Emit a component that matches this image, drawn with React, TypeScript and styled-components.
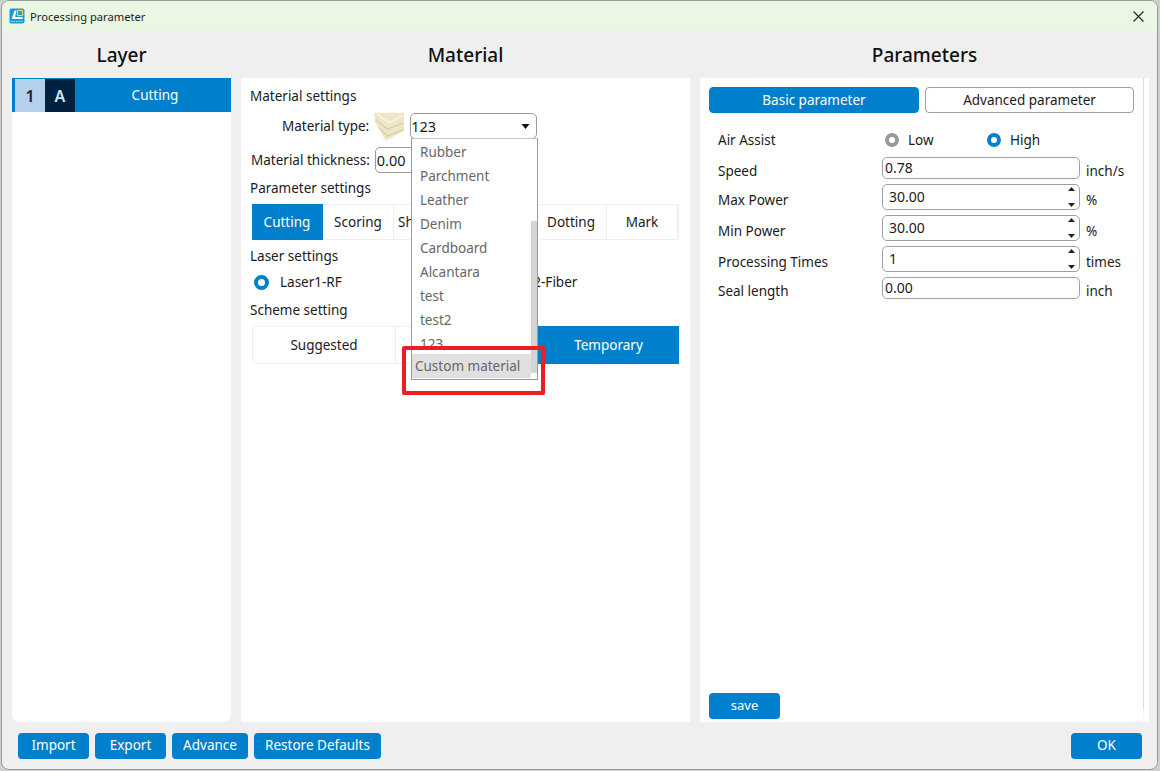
import { createGlobalStyle } from "styled-components";
import styled from "styled-components";

const GlobalStyle = createGlobalStyle`
  html, body {
    margin: 0;
    padding: 0;
    background: #cfcfcf;
  }
  body {
    font-family: "Noto Sans", "Liberation Sans", sans-serif;
    font-size: 13.5px;
    color: #1a1a1a;
  }
`;

const blue = "#0080cc";

const Screen = styled.div`
  width: 1160px;
  height: 771px;
  padding: 0 2px 1px 1px;
  box-sizing: border-box;
  overflow: hidden;
`;

const Window = styled.div`
  height: 100%;
  display: flex;
  flex-direction: column;
  background: #efefef;
  border: 1px solid #9a9a9a;
  border-radius: 8px;
  box-sizing: border-box;
  overflow: hidden;
`;

const TitleBar = styled.div`
  height: 30px;
  flex: none;
  display: flex;
  align-items: center;
  gap: 5px;
  padding: 0 13px 0 7px;
  background: #eaf7e3;
  font-size: 11.2px;
  color: #222;
`;

const TitleText = styled.span`
  flex: 1;
`;

const Columns = styled.div`
  flex: 1;
  min-height: 0;
  display: grid;
  grid-template-columns: 219px 449px 449px;
  gap: 10px;
  padding: 0 0 0 10px;
`;

const Column = styled.section`
  display: flex;
  flex-direction: column;
  min-height: 0;
`;

const Heading = styled.h2`
  height: 47px;
  margin: 0;
  flex: none;
  display: flex;
  align-items: center;
  justify-content: center;
  font-size: 19px;
  font-weight: 500;
  color: #111;
`;

const LayerPanel = styled.div`
  flex: 1;
  background: #fff;
  border-radius: 0 0 8px 8px;
`;

const LayerRow = styled.div`
  height: 34px;
  display: flex;
  align-items: stretch;
  padding: 1px 0 0 3px;
  box-sizing: border-box;
  background: ${blue};
  color: #fff;
`;

const LayerCell = styled.span<{ $bg: string; $fg: string }>`
  width: 30px;
  display: flex;
  align-items: center;
  justify-content: center;
  font-size: 16px;
  font-weight: 600;
  background: ${(p) => p.$bg};
  color: ${(p) => p.$fg};
`;

const LayerName = styled.span`
  flex: 1;
  display: flex;
  align-items: center;
  justify-content: center;
  padding: 0 0 2px 4px;
`;

const MaterialPanel = styled.div`
  position: relative;
  flex: 1;
  background: #fff;
  padding: 8px 11px 0 9px;
  box-sizing: border-box;
`;

const GroupTitle = styled.div`
  height: 20px;
  line-height: 20px;
`;

const FieldRow = styled.div`
  display: flex;
  align-items: center;
  height: 26px;
`;

const TypeRow = styled(FieldRow)`
  margin-top: 7px;
  padding-left: 32px;
`;

const ThicknessRow = styled(FieldRow)`
  margin: 8px 0 5px 1px;
`;

const FieldLabel = styled.span`
  margin-right: 5px;
  white-space: nowrap;
`;

const SelectBox = styled.div`
  width: 127px;
  height: 26px;
  margin-left: 6px;
  display: flex;
  align-items: center;
  justify-content: space-between;
  padding: 0 6px 0 0;
  box-sizing: border-box;
  background: #fff;
  border: 1px solid #9a9a9a;
  border-radius: 5px;
  font-size: 14.5px;
`;

const ThicknessInput = styled.div`
  width: 150px;
  height: 26px;
  padding-left: 1px;
  line-height: 24px;
  box-sizing: border-box;
  border: 1px solid #9a9a9a;
  border-radius: 5px;
  font-size: 14.5px;
`;

const TabStrip = styled.div`
  display: grid;
  grid-template-columns: repeat(6, 71px);
  height: 36px;
  margin: 6px 0 6px 2px;
  border: 1px solid #efefef;
  border-left: 0;
  border-radius: 3px;
  box-sizing: border-box;
`;

const Tab = styled.div<{ $active?: boolean; $bare?: boolean }>`
  display: flex;
  align-items: center;
  justify-content: ${(p) => (p.$bare ? "flex-start" : "center")};
  padding-left: ${(p) => (p.$bare ? "4px" : "0")};
  padding-bottom: 1px;
  box-sizing: border-box;
  margin: -1px 0;
  background: ${(p) => (p.$active ? blue : "transparent")};
  color: ${(p) => (p.$active ? "#fff" : "#1a1a1a")};
  border-right: 1px solid ${(p) => (p.$active ? blue : "#efefef")};
`;

const LaserChoices = styled.div`
  display: grid;
  grid-template-columns: 219px 1fr;
  height: 30px;
  margin: 1px 0 3px 4px;
  align-items: center;
`;

const RadioOption = styled.label`
  display: flex;
  align-items: center;
  gap: 11px;
  white-space: nowrap;
`;

const RadioDot = styled.span<{ $on?: boolean }>`
  width: 15px;
  height: 15px;
  box-sizing: border-box;
  border-radius: 50%;
  border: 4px solid ${(p) => (p.$on ? blue : "#999")};
  background: #fff;
`;

const SchemeStrip = styled.div`
  display: grid;
  grid-template-columns: 143px 142px 142px;
  height: 38px;
  margin: 6px 0 0 2px;
  border: 1px solid #efefef;
  border-radius: 3px;
  box-sizing: border-box;
`;

const SchemeCell = styled.div<{ $active?: boolean }>`
  display: flex;
  align-items: center;
  justify-content: center;
  margin: -1px 0;
  background: ${(p) => (p.$active ? blue : "transparent")};
  color: ${(p) => (p.$active ? "#fff" : "#1a1a1a")};
  border-right: 1px solid #efefef;
`;

const DropList = styled.div`
  position: absolute;
  left: 170px;
  top: 60px;
  width: 127px;
  height: 242px;
  box-sizing: border-box;
  background: #fff;
  border: 1px solid #9a9a9a;
  border-top-color: #c4c4c4;
  overflow: hidden;
  display: flex;
`;

const DropItems = styled.div`
  width: 119px;
  display: flex;
  flex-direction: column;
  padding-top: 2px;
`;

const DropItem = styled.div`
  flex: none;
  height: 24px;
  line-height: 22px;
  padding-left: 8px;
  color: #666;
`;

const DropCustom = styled(DropItem)`
  position: absolute;
  left: 0;
  top: 215px;
  width: 119px;
  box-sizing: border-box;
  padding-left: 3px;
  line-height: 25px;
  background: #e0e0e0;
`;

const DropScroll = styled.div`
  width: 6px;
  margin-left: 1px;
  display: flex;
  flex-direction: column;
  justify-content: flex-end;
  padding-bottom: 6px;
`;

const DropThumb = styled.div`
  height: 152px;
  background: #d4d4d4;
`;

const Highlight = styled.div`
  position: absolute;
  left: 161px;
  top: 268px;
  width: 143px;
  height: 49px;
  box-sizing: border-box;
  border: 4px solid #ee1c25;
  border-radius: 2px;
`;

const ParamPanel = styled.div`
  flex: 1;
  display: flex;
  background: #fff;
  min-height: 0;
`;

const ParamBody = styled.div`
  flex: 1;
  display: flex;
  flex-direction: column;
  padding: 9px 9px 3px 9px;
  box-sizing: border-box;
`;

const ModeRow = styled.div`
  display: grid;
  grid-template-columns: 210px 209px;
  gap: 6px;
`;

const ModeButton = styled.div<{ $active?: boolean }>`
  height: 26px;
  box-sizing: border-box;
  display: flex;
  align-items: center;
  justify-content: center;
  border-radius: 4px;
  background: ${(p) => (p.$active ? blue : "#fff")};
  color: ${(p) => (p.$active ? "#fff" : "#1a1a1a")};
  border: 1px solid ${(p) => (p.$active ? blue : "#a0a0a0")};
`;

const ParamGrid = styled.div`
  flex: 1;
  display: grid;
  grid-template-columns: 158px 198px auto;
  grid-auto-rows: min-content;
  column-gap: 6px;
  align-items: center;
  margin-top: 17px;
  padding-left: 9px;
`;

const ParamLabel = styled.span<{ $h: number }>`
  height: ${(p) => p.$h}px;
  line-height: ${(p) => p.$h + 6}px;
  margin-bottom: 5px;
`;

const AirLabel = styled.span`
  height: 22px;
  line-height: 20px;
  margin-bottom: 5px;
`;

const Unit = styled(ParamLabel)``;

const AirChoices = styled.div`
  grid-column: 2 / 4;
  display: grid;
  grid-template-columns: 102px 1fr;
  height: 20px;
  margin-bottom: 7px;
  padding-left: 3px;
  align-items: center;
`;

const AirOption = styled(RadioOption)`
  gap: 9px;
`;

const SmallDot = styled(RadioDot)`
  width: 14px;
  height: 14px;
`;

const TextInput = styled.div`
  height: 22px;
  margin-bottom: 5px;
  padding: 0 0 1px 2px;
  box-sizing: border-box;
  display: flex;
  align-items: center;
  border: 1px solid #a0a0a0;
  border-radius: 5px;
  font-size: 14px;
`;

const SpinInput = styled(TextInput)`
  height: 26px;
  justify-content: space-between;
  padding: 0 3px 1px 6px;
`;

const SpinArrows = styled.svg`
  width: 9px;
  height: 22px;
  margin-bottom: -1px;
`;

const SaveButton = styled.button`
  align-self: flex-start;
  width: 71px;
  height: 26px;
  padding: 0 0 2px;
  border: 0;
  border-radius: 4px;
  background: ${blue};
  color: #fff;
  font: inherit;
  font-size: 13px;
`;

const ScrollTrack = styled.div`
  width: 5px;
  margin-right: 5px;
  padding-bottom: 13px;
  display: flex;
  background: #f6f6f6;
`;

const ScrollThumb = styled.div`
  flex: 1;
  background: #dcdcdc;
  border-radius: 0 0 2px 2px;
`;

const Footer = styled.footer`
  height: 47px;
  flex: none;
  display: flex;
  gap: 6px;
  padding: 11px 15px 0 16px;
  box-sizing: border-box;
`;

const FootButton = styled.button<{ $w: number }>`
  width: ${(p) => p.$w}px;
  height: 26px;
  padding: 0 0 2px;
  border: 0;
  border-radius: 4px;
  background: ${blue};
  color: #fff;
  font: inherit;
`;

const FootSpacer = styled.div`
  flex: 1;
`;

const MATERIALS = ["Rubber", "Parchment", "Leather", "Denim", "Cardboard", "Alcantara", "test", "test2", "123"];

const AppLogo = () => (
  <svg width="16" height="16" viewBox="0 0 16 16">
    <rect x="0.5" y="0.5" width="15" height="15" rx="2" fill="#1b9ad8" />
    <path d="M3 10.5 L5.5 2.5 H7.5 L6 9 H13.5 V11 H3 Z" fill="#fff" />
    <rect x="8.5" y="2.5" width="5" height="5" fill="none" stroke="#f5d33c" strokeWidth="1.2" />
    <path d="M2 13.3 H14" stroke="#bfe6fa" strokeWidth="1" strokeDasharray="1.5 1" />
  </svg>
);

const CloseIcon = () => (
  <svg width="11" height="11" viewBox="0 0 11 11">
    <path d="M0.5 0.5 L10.5 10.5 M10.5 0.5 L0.5 10.5" stroke="#222" strokeWidth="1.1" />
  </svg>
);

const CaretIcon = () => (
  <svg width="9" height="5" viewBox="0 0 9 5">
    <path d="M0.5 0 H8.5 L4.5 5 Z" fill="#111" />
  </svg>
);

const BoardStack = () => (
  <svg width="30" height="30" viewBox="0 0 30 30">
    <path d="M0 1.7 H30 V20 L11.7 30 L1 11 Z" fill="#efe6c9" />
    <path d="M3.3 3.3 L15 11.7 L28.3 5" fill="none" stroke="#fbf6e4" strokeWidth="1.3" />
    <path d="M1.7 8.3 L13.3 18.3 L30 11.7" fill="none" stroke="#d6caa4" strokeWidth="1.1" />
    <path d="M5 16.7 L13.3 25 L30 18.3" fill="none" stroke="#d6caa4" strokeWidth="1.1" />
  </svg>
);

const Spin = () => (
  <SpinArrows viewBox="0 0 9 22">
    <path d="M4.5 1 L8 5 H1 Z" fill="#222" />
    <path d="M1 17 H8 L4.5 21 Z" fill="#222" />
  </SpinArrows>
);

export default function App() {
  return (
    <Screen>
      <GlobalStyle />
      <Window>
        <TitleBar>
          <AppLogo />
          <TitleText>Processing parameter</TitleText>
          <CloseIcon />
        </TitleBar>

        <Columns>
          <Column>
            <Heading>Layer</Heading>
            <LayerPanel>
              <LayerRow>
                <LayerCell $bg="#b3d1ec" $fg="#12263a">1</LayerCell>
                <LayerCell $bg="#00213f" $fg="#d5e2ee">A</LayerCell>
                <LayerName>Cutting</LayerName>
              </LayerRow>
            </LayerPanel>
          </Column>

          <Column>
            <Heading>Material</Heading>
            <MaterialPanel>
              <GroupTitle>Material settings</GroupTitle>
              <TypeRow>
                <FieldLabel>Material type:</FieldLabel>
                <BoardStack />
                <SelectBox>
                  123
                  <CaretIcon />
                </SelectBox>
              </TypeRow>
              <ThicknessRow>
                <FieldLabel>Material thickness:</FieldLabel>
                <ThicknessInput>0.00</ThicknessInput>
              </ThicknessRow>
              <GroupTitle>Parameter settings</GroupTitle>
              <TabStrip>
                <Tab $active>Cutting</Tab>
                <Tab>Scoring</Tab>
                <Tab $bare>Sh</Tab>
                <Tab />
                <Tab>Dotting</Tab>
                <Tab>Mark</Tab>
              </TabStrip>
              <GroupTitle>Laser settings</GroupTitle>
              <LaserChoices>
                <RadioOption>
                  <RadioDot $on />
                  Laser1-RF
                </RadioOption>
                <RadioOption>
                  <RadioDot />
                  Laser2-Fiber
                </RadioOption>
              </LaserChoices>
              <GroupTitle>Scheme setting</GroupTitle>
              <SchemeStrip>
                <SchemeCell>Suggested</SchemeCell>
                <SchemeCell />
                <SchemeCell $active>Temporary</SchemeCell>
              </SchemeStrip>

              <DropList>
                <DropItems>
                  {MATERIALS.map((m) => (
                    <DropItem key={m}>{m}</DropItem>
                  ))}
                </DropItems>
                <DropCustom>Custom material</DropCustom>
                <DropScroll>
                  <DropThumb />
                </DropScroll>
              </DropList>
              <Highlight />
            </MaterialPanel>
          </Column>

          <Column>
            <Heading>Parameters</Heading>
            <ParamPanel>
              <ParamBody>
                <ModeRow>
                  <ModeButton $active>Basic parameter</ModeButton>
                  <ModeButton>Advanced parameter</ModeButton>
                </ModeRow>
                <ParamGrid>
                  <AirLabel>Air Assist</AirLabel>
                  <AirChoices>
                    <AirOption>
                      <SmallDot />
                      Low
                    </AirOption>
                    <AirOption>
                      <SmallDot $on />
                      High
                    </AirOption>
                  </AirChoices>

                  <ParamLabel $h={22}>Speed</ParamLabel>
                  <TextInput>0.78</TextInput>
                  <Unit $h={22}>inch/s</Unit>

                  <ParamLabel $h={26}>Max Power</ParamLabel>
                  <SpinInput>30.00<Spin /></SpinInput>
                  <Unit $h={26}>%</Unit>

                  <ParamLabel $h={26}>Min Power</ParamLabel>
                  <SpinInput>30.00<Spin /></SpinInput>
                  <Unit $h={26}>%</Unit>

                  <ParamLabel $h={26}>Processing Times</ParamLabel>
                  <SpinInput>1<Spin /></SpinInput>
                  <Unit $h={26}>times</Unit>

                  <ParamLabel $h={22}>Seal length</ParamLabel>
                  <TextInput>0.00</TextInput>
                  <Unit $h={22}>inch</Unit>
                </ParamGrid>
                <SaveButton>save</SaveButton>
              </ParamBody>
              <ScrollTrack>
                <ScrollThumb />
              </ScrollTrack>
            </ParamPanel>
          </Column>
        </Columns>

        <Footer>
          <FootButton $w={71}>Import</FootButton>
          <FootButton $w={71}>Export</FootButton>
          <FootButton $w={76}>Advance</FootButton>
          <FootButton $w={127}>Restore Defaults</FootButton>
          <FootSpacer />
          <FootButton $w={71}>OK</FootButton>
        </Footer>
      </Window>
    </Screen>
  );
}
